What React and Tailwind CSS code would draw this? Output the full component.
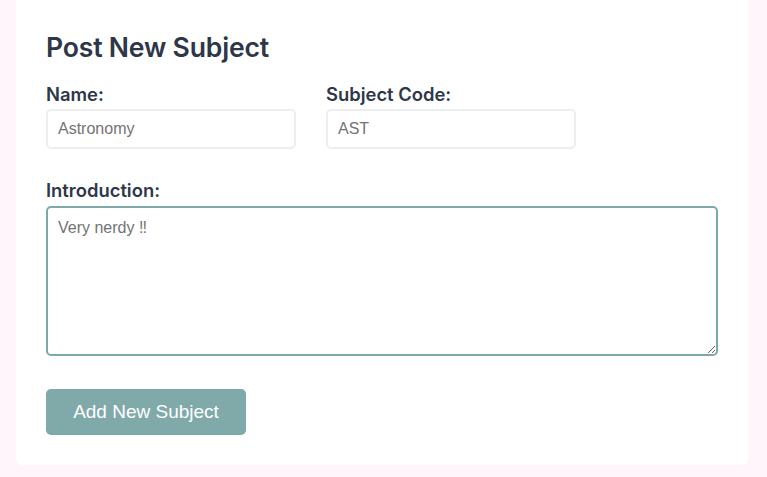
export default function App() {
  return (
    <div className="min-h-[477px] bg-[#fff5fa] pl-4 pr-[19px] pb-3" style={{ fontFamily: "Inter, 'Noto Sans', sans-serif" }}>
      <div className="bg-white rounded-b-md px-[30px] pt-[30px] pb-[30px]">
        <h1 className="text-[26.6px] leading-[34px] font-semibold text-[#2d3748] tracking-[-0.2px]">Post New Subject</h1>
        <div className="flex gap-[30px] mt-[18px]">
          <div className="flex flex-col">
            <label className="text-[18.4px] leading-6 font-semibold text-[#2d3748]">Name:</label>
            <input
              defaultValue="Astronomy"
              className="mt-[3px] w-[250px] h-10 border-2 border-[#eceeef] rounded-[5px] px-[10px] text-[16px] text-[#737373] outline-none"
              style={{ fontFamily: "'Liberation Sans', Arial, sans-serif" }}
            />
          </div>
          <div className="flex flex-col">
            <label className="text-[18.4px] leading-6 font-semibold text-[#2d3748]">Subject Code:</label>
            <input
              defaultValue="AST"
              className="mt-[3px] w-[250px] h-10 border-2 border-[#eceeef] rounded-[5px] px-[10px] text-[16px] text-[#737373] outline-none"
              style={{ fontFamily: "'Liberation Sans', Arial, sans-serif" }}
            />
          </div>
        </div>
        <div className="flex flex-col mt-[29px]">
          <label className="text-[18.4px] leading-6 font-semibold text-[#2d3748]">Introduction:</label>
          <textarea
            defaultValue="Very nerdy ‼"
            className="mt-[4px] w-full h-[150px] border-2 border-[#7fa8a8] rounded-[5px] px-[10px] py-[8px] text-[16px] text-[#737373] outline-none"
            style={{ fontFamily: "'Liberation Sans', Arial, sans-serif" }}
          />
        </div>
        <button
          className="mt-[33px] w-[200px] h-[46px] bg-[#80a9aa] rounded-[5px] text-white text-[19px]"
          style={{ fontFamily: "'Liberation Sans', Arial, sans-serif" }}
        >
          Add New Subject
        </button>
      </div>
    </div>
  );
}
